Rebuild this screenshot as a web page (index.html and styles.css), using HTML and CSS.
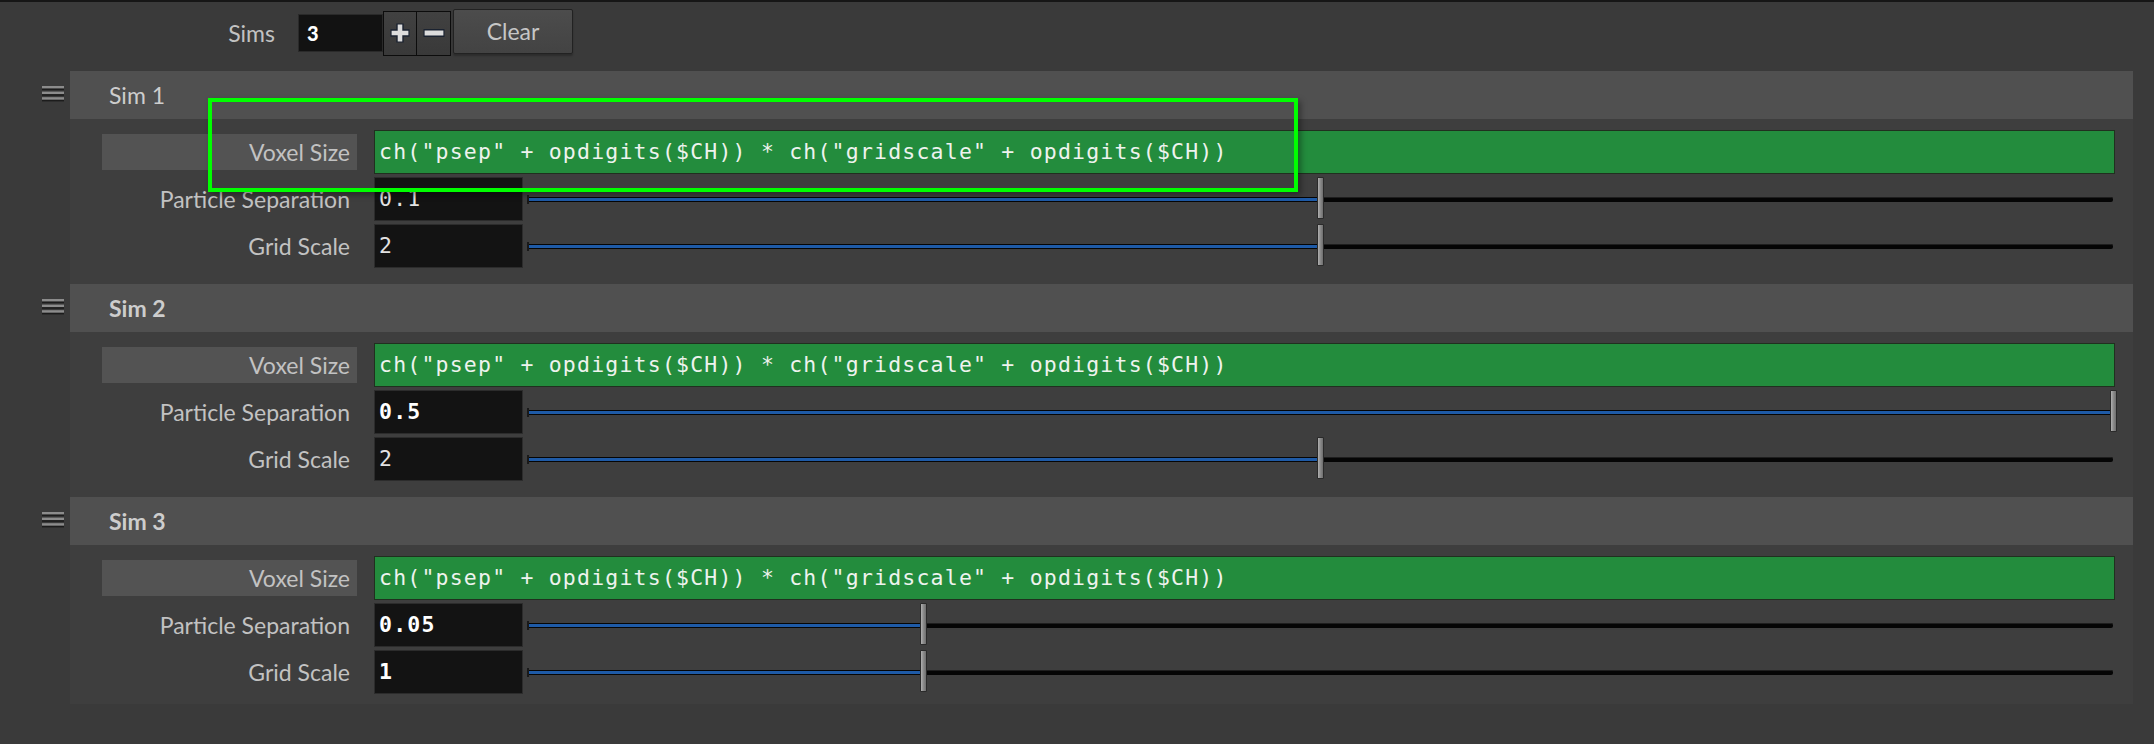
FILE: index.html
```html
<!DOCTYPE html>
<html>
<head>
<meta charset="utf-8">
<title>Sims</title>
<link rel="stylesheet" href="styles.css">
</head>
<body>
<div class="toolbar">
  <span class="tb-label">Sims</span>
  <div class="int-field">3</div>
  <div class="pm">
    <button class="pm-btn pm-plus" aria-label="Add">
      <svg width="22" height="22" viewBox="0 0 22 22"><path d="M11 1.5V20.5M1.5 11H20.5" stroke="#1a2230" stroke-width="7.4"/><path d="M11 2.6V19.4M2.6 11H19.4" stroke="#dcdcdc" stroke-width="4.6"/></svg>
    </button>
    <button class="pm-btn" aria-label="Remove">
      <svg width="24" height="22" viewBox="0 0 24 22"><path d="M1.5 11H22.5" stroke="#1a2230" stroke-width="8"/><path d="M2.6 11H21.4" stroke="#dcdcdc" stroke-width="5"/></svg>
    </button>
  </div>
  <button class="clear">Clear</button>
</div>

<div class="sims">
  <section class="sim">
    <div class="grip"><svg width="22" height="18" viewBox="0 0 22 18"><rect x="0" y="0" width="22" height="2.6" fill="#8c8c8c"/><rect x="0" y="2.6" width="22" height="1.6" fill="#1c1c1c"/><rect x="0" y="5.6" width="22" height="2.6" fill="#8c8c8c"/><rect x="0" y="8.2" width="22" height="1.6" fill="#1c1c1c"/><rect x="0" y="11.2" width="22" height="2.6" fill="#8c8c8c"/><rect x="0" y="13.8" width="22" height="1.6" fill="#1c1c1c"/></svg></div>
    <div class="sim-body">
      <div class="sim-head">Sim 1</div>
      <div class="rows">
        <div class="row">
          <div class="label label-bg">Voxel Size</div>
          <div class="expr">ch("psep" + opdigits($CH)) * ch("gridscale" + opdigits($CH))</div>
        </div>
        <div class="row">
          <div class="label">Particle Separation</div>
          <div class="num">0.1</div>
          <div class="slider"><div class="fill" style="width:50%"></div><div class="handle" style="left:50%"></div></div>
        </div>
        <div class="row">
          <div class="label">Grid Scale</div>
          <div class="num">2</div>
          <div class="slider"><div class="fill" style="width:50%"></div><div class="handle" style="left:50%"></div></div>
        </div>
      </div>
    </div>
  </section>

  <section class="sim">
    <div class="grip"><svg width="22" height="18" viewBox="0 0 22 18"><rect x="0" y="0" width="22" height="2.6" fill="#8c8c8c"/><rect x="0" y="2.6" width="22" height="1.6" fill="#1c1c1c"/><rect x="0" y="5.6" width="22" height="2.6" fill="#8c8c8c"/><rect x="0" y="8.2" width="22" height="1.6" fill="#1c1c1c"/><rect x="0" y="11.2" width="22" height="2.6" fill="#8c8c8c"/><rect x="0" y="13.8" width="22" height="1.6" fill="#1c1c1c"/></svg></div>
    <div class="sim-body">
      <div class="sim-head bold">Sim 2</div>
      <div class="rows">
        <div class="row">
          <div class="label label-bg">Voxel Size</div>
          <div class="expr">ch("psep" + opdigits($CH)) * ch("gridscale" + opdigits($CH))</div>
        </div>
        <div class="row">
          <div class="label">Particle Separation</div>
          <div class="num bold">0.5</div>
          <div class="slider"><div class="fill" style="width:100%"></div><div class="handle" style="left:100%"></div></div>
        </div>
        <div class="row">
          <div class="label">Grid Scale</div>
          <div class="num">2</div>
          <div class="slider"><div class="fill" style="width:50%"></div><div class="handle" style="left:50%"></div></div>
        </div>
      </div>
    </div>
  </section>

  <section class="sim">
    <div class="grip"><svg width="22" height="18" viewBox="0 0 22 18"><rect x="0" y="0" width="22" height="2.6" fill="#8c8c8c"/><rect x="0" y="2.6" width="22" height="1.6" fill="#1c1c1c"/><rect x="0" y="5.6" width="22" height="2.6" fill="#8c8c8c"/><rect x="0" y="8.2" width="22" height="1.6" fill="#1c1c1c"/><rect x="0" y="11.2" width="22" height="2.6" fill="#8c8c8c"/><rect x="0" y="13.8" width="22" height="1.6" fill="#1c1c1c"/></svg></div>
    <div class="sim-body last">
      <div class="sim-head bold">Sim 3</div>
      <div class="rows">
        <div class="row">
          <div class="label label-bg">Voxel Size</div>
          <div class="expr">ch("psep" + opdigits($CH)) * ch("gridscale" + opdigits($CH))</div>
        </div>
        <div class="row">
          <div class="label">Particle Separation</div>
          <div class="num bold">0.05</div>
          <div class="slider"><div class="fill" style="width:25%"></div><div class="handle" style="left:25%"></div></div>
        </div>
        <div class="row">
          <div class="label">Grid Scale</div>
          <div class="num bold">1</div>
          <div class="slider"><div class="fill" style="width:25%"></div><div class="handle" style="left:25%"></div></div>
        </div>
      </div>
    </div>
  </section>
</div>

<div class="annot"></div>
</body>
</html>
```

FILE: styles.css
```css
html, body {
  margin: 0;
  padding: 0;
}

body {
  width: 2154px;
  height: 742px;
  overflow: hidden;
  position: relative;
  background: #3a3a3a;
  border-top: 2px solid #161616;
  font-family: Lato, "Open Sans", sans-serif;
  color: #c2c2c2;
}

/* ---------- toolbar ---------- */
.toolbar {
  height: 62px;
  display: flex;
  align-items: center;
}

.tb-label {
  width: 100px;
  margin-left: 175px;
  margin-right: 23px;
  text-align: right;
  font-size: 23px;
  line-height: 1;
}

.int-field {
  width: 85px;
  height: 38px;
  box-sizing: border-box;
  background: #121212;
  border: 1px solid #2a2a2a;
  color: #ffffff;
  font-family: Lato, sans-serif;
  font-weight: 900;
  font-size: 20px;
  display: flex;
  align-items: center;
  padding-left: 8px;
}

.pm {
  display: flex;
  height: 45px;
  box-sizing: border-box;
  border: 1px solid #0c0c0c;
  background: #3c3c3c;
}

.pm-btn {
  width: 33px;
  height: 100%;
  margin: 0;
  padding: 0;
  border: 0;
  background: linear-gradient(#414141, #393939);
  display: flex;
  align-items: center;
  justify-content: center;
}

.pm-plus {
  border-right: 1px solid #0c0c0c;
}

.clear {
  margin: 0 0 3px 2px;
  padding: 0;
  width: 120px;
  height: 45px;
  box-sizing: border-box;
  border: 1px solid #222222;
  border-radius: 2px;
  background: linear-gradient(#4c4c4c, #434343);
  color: #c6c6c6;
  font-family: Lato, "Open Sans", sans-serif;
  font-size: 23px;
  line-height: 1;
  box-shadow: 0 2px 2px rgba(0, 0, 0, 0.25);
}

/* ---------- multiparm blocks ---------- */
.sims {
  margin-top: 7px;
}

.sim {
  display: flex;
}

.grip {
  width: 70px;
  flex: none;
  box-sizing: border-box;
  padding: 15px 0 0 42px;
}

.grip svg {
  display: block;
}

.sim-body {
  width: 2063px;
  background: #3e3e3e;
}

.sim-head {
  height: 48px;
  background: #505050;
  display: flex;
  align-items: center;
  padding-left: 39px;
  font-size: 23px;
  color: #cdcdcd;
}

.sim-head.bold {
  font-weight: 700;
}

.rows {
  display: flex;
  flex-direction: column;
  gap: 3px;
  padding: 11px 18px 16px 32px;
}

.last .rows {
  padding-bottom: 10px;
}

.row {
  display: flex;
  align-items: center;
  height: 44px;
}

.label {
  width: 255px;
  flex: none;
  box-sizing: border-box;
  padding-right: 7px;
  margin-right: 17px;
  text-align: right;
  font-size: 23px;
  line-height: 1;
  color: #c2c2c2;
  white-space: nowrap;
}

.label-bg {
  height: 36px;
  display: flex;
  align-items: center;
  justify-content: flex-end;
  background: #535353;
}

.expr,
.num {
  font-family: "DejaVu Sans Mono", "Liberation Mono", monospace;
  font-size: 21.5px;
  letter-spacing: 1.2px;
  line-height: 1;
  box-sizing: border-box;
  height: 44px;
  display: flex;
  align-items: center;
  white-space: nowrap;
}

.expr {
  flex: 1;
  background: #238c3d;
  border: 1px solid #20301f;
  color: #eef3ee;
  padding-left: 4px;
}

.num {
  width: 149px;
  flex: none;
  background: #131313;
  border: 1px solid #2c2c2c;
  color: #e2e2e2;
  padding-left: 4px;
}

.num.bold {
  font-weight: 700;
  color: #ffffff;
}

/* ---------- slider ---------- */
.slider {
  flex: 1;
  position: relative;
  height: 44px;
  margin: 0 2px 0 4px;
}

.slider::before {
  content: "";
  position: absolute;
  left: 0;
  right: 0;
  top: 20px;
  height: 5px;
  background: #050505;
  border-radius: 2px;
  box-shadow: inset 0 2px 0 -1px #1e1e1e;
}

.slider::after {
  content: "";
  position: absolute;
  left: 0;
  top: 18px;
  width: 2px;
  height: 9px;
  background: #1a1a1a;
}

.fill {
  position: absolute;
  left: 0;
  top: 20px;
  height: 5px;
  box-sizing: border-box;
  border: 1px solid #050505;
  background: #1e5aa6;
  border-radius: 2px;
}

.handle {
  position: absolute;
  top: 0;
  width: 7px;
  height: 42px;
  margin-left: -3.5px;
  box-sizing: border-box;
  border: 1px solid #2a2a2a;
  border-radius: 1px;
  background: linear-gradient(to right, #b0b0b0, #8a8a8a 50%, #6e6e6e);
}

/* ---------- annotation overlay ---------- */
.annot {
  position: absolute;
  left: 208px;
  top: 96px;
  width: 1090px;
  height: 94px;
  box-sizing: border-box;
  border: 4px solid #00ff00;
  box-shadow: 3px 3px 6px rgba(0, 0, 0, 0.35);
  pointer-events: none;
}
```
